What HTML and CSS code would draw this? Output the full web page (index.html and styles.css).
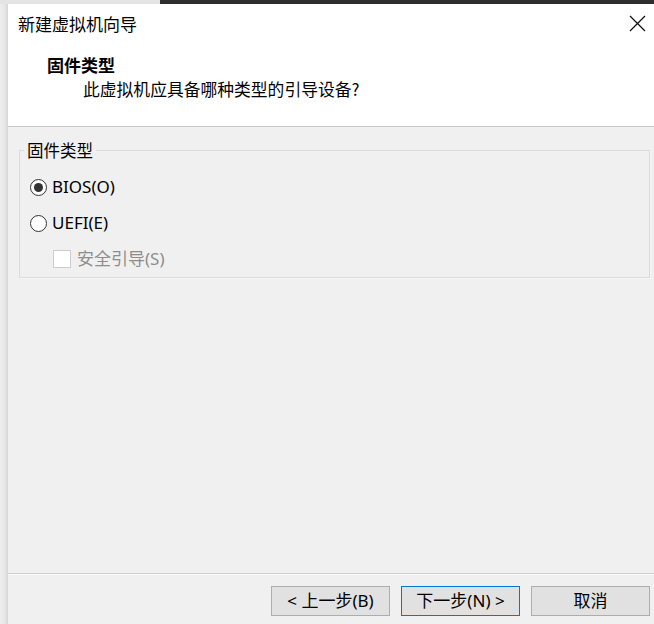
FILE: index.html
```html
<!DOCTYPE html>
<html lang="zh-CN">
<head>
<meta charset="utf-8">
<title>新建虚拟机向导</title>
<link rel="stylesheet" href="styles.css">
</head>
<body>
<div class="top-strip">
  <div class="strip-light"></div>
  <div class="strip-dark"></div>
</div>
<div class="frame">
  <div class="left-shadow"></div>
  <div class="window">
    <div class="head">
      <div class="titlebar">
        <span class="title">新建虚拟机向导</span>
        <svg class="close" width="17" height="17" viewBox="0 0 17 17">
          <path d="M1 1 L16 16 M16 1 L1 16" stroke="#111" stroke-width="1.3" fill="none"/>
        </svg>
      </div>
      <div class="heading">固件类型</div>
      <div class="subheading">此虚拟机应具备哪种类型的引导设备?</div>
    </div>
    <div class="body">
      <fieldset class="group">
        <legend class="group-label">固件类型</legend>
        <div class="option">
          <span class="radio checked"></span>
          <span class="opt-text">BIOS(O)</span>
        </div>
        <div class="option">
          <span class="radio"></span>
          <span class="opt-text">UEFI(E)</span>
        </div>
        <div class="option sub">
          <span class="checkbox"></span>
          <span class="opt-text disabled">安全引导(S)</span>
        </div>
      </fieldset>
      <div class="spacer"></div>
      <div class="footer">
        <button class="btn">&lt; 上一步(B)</button>
        <button class="btn default">下一步(N) &gt;</button>
        <button class="btn">取消</button>
      </div>
    </div>
  </div>
</div>
</body>
</html>
```
FILE: styles.css
```css
* { box-sizing: border-box; }
html, body {
  margin: 0;
  padding: 0;
  width: 654px;
  height: 624px;
  overflow: hidden;
  background: #ececec;
  font-family: "Noto Sans", "Noto Sans CJK SC", sans-serif;
  color: #000;
}
.top-strip {
  display: flex;
  height: 4px;
}
.strip-light {
  width: 160px;
  background: #e4e4e4;
}
.strip-dark {
  flex: 1;
  background: #2e2e2e;
}
.frame {
  display: flex;
  height: 620px;
}
.left-shadow {
  width: 8px;
  background: linear-gradient(to right, #eeeeee, #e6e6e6 60%, #d6d6d6);
}
.window {
  flex: 1;
  display: flex;
  flex-direction: column;
  background: #f0f0f0;
}
.head {
  background: #fff;
  height: 123px;
  border-bottom: 1px solid #c9c9c9;
}
.titlebar {
  display: flex;
  align-items: center;
  justify-content: space-between;
  height: 40px;
  padding: 0 8px 0 10px;
}
.title {
  font-family: "Noto Sans CJK SC", sans-serif;
  font-size: 17px;
  line-height: 40px;
}
.close { display: block; margin-top: -1px; }
.heading {
  margin-top: 9px;
  padding-left: 39px;
  font-family: "Noto Sans CJK SC", sans-serif;
  font-weight: bold;
  font-size: 17px;
  line-height: 24px;
}
.subheading {
  padding-left: 75px;
  font-family: "Noto Sans CJK SC", sans-serif;
  font-size: 16.8px;
  line-height: 24px;
}
.body {
  flex: 1;
  display: flex;
  flex-direction: column;
}
.group {
  margin: 13px 4px 0 11px;
  padding: 9px 0 0 0;
  border: 1px solid #dadada;
  box-shadow: 1px 1px 0 #f7f7f7;
  min-width: 0;
}
.group-label {
  margin-left: 4px;
  padding: 0 3px;
  font-family: "Noto Sans CJK SC", sans-serif;
  font-size: 16.5px;
  line-height: 20px;
  color: #000;
}
.option {
  display: flex;
  align-items: center;
  height: 36px;
  padding-left: 10px;
  gap: 5px;
}
.option.sub {
  padding-left: 33px;
  gap: 6px;
}
.radio {
  width: 17px;
  height: 17px;
  border: 1.3px solid #333;
  border-radius: 50%;
  background: #fff;
  display: flex;
  align-items: center;
  justify-content: center;
}
.radio.checked::after {
  content: "";
  width: 9px;
  height: 9px;
  border-radius: 50%;
  background: #333;
}
.checkbox {
  width: 18px;
  height: 18px;
  border: 1px solid #cccccc;
  background: #fff;
}
.opt-text {
  font-size: 17px;
  line-height: 20px;
}
.opt-text.disabled { color: #8d8d8d; }
.spacer { flex: 1; }
.footer {
  height: 51px;
  border-top: 1px solid #cdcdcd;
  box-shadow: inset 0 1px 0 #fafafa;
  display: flex;
  justify-content: flex-end;
  align-items: flex-start;
  gap: 11px;
  padding: 12px 4px 0 0;
}
.btn {
  width: 119px;
  height: 30px;
  background: #e1e1e1;
  border: 1px solid #adadad;
  font-family: "Noto Sans", "Noto Sans CJK SC", sans-serif;
  font-size: 17px;
  color: #000;
  padding: 0;
  line-height: 28px;
}
.btn.default { border-color: #0078d7; }
```
